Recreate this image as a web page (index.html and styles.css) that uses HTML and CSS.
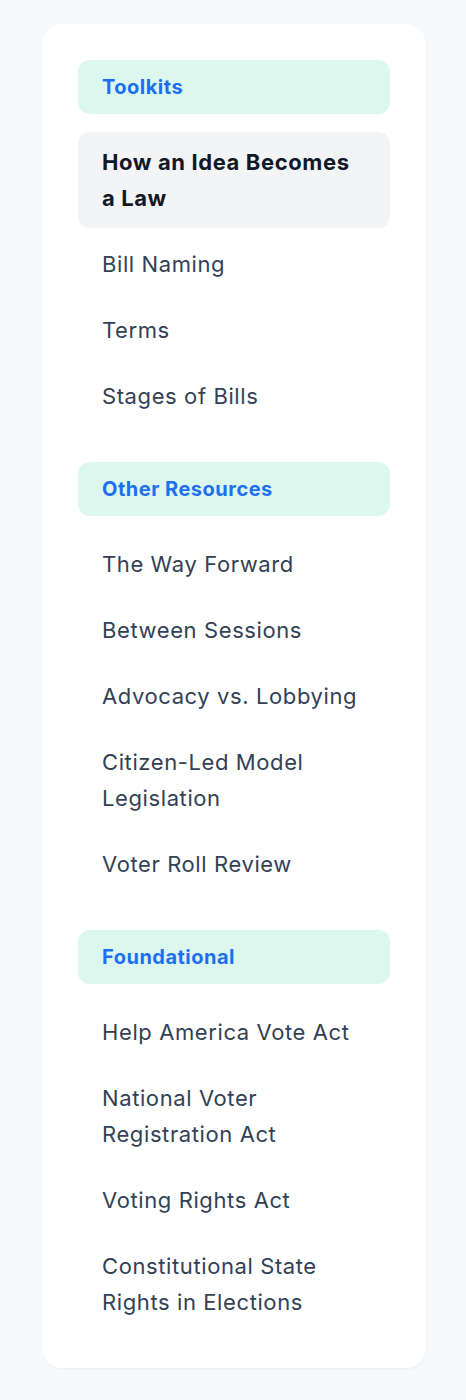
FILE: index.html
```html
<!DOCTYPE html>
<html lang="en">
<head>
<meta charset="utf-8">
<title>Toolkits</title>
<link rel="stylesheet" href="styles.css">
</head>
<body>
<nav class="card">
  <section class="group">
    <div class="group-title">Toolkits</div>
    <ul class="items">
      <li class="item active">How an Idea Becomes a Law</li>
      <li class="item">Bill Naming</li>
      <li class="item">Terms</li>
      <li class="item">Stages of Bills</li>
    </ul>
  </section>
  <section class="group">
    <div class="group-title">Other Resources</div>
    <ul class="items">
      <li class="item">The Way Forward</li>
      <li class="item">Between Sessions</li>
      <li class="item">Advocacy vs. Lobbying</li>
      <li class="item">Citizen-Led Model Legislation</li>
      <li class="item">Voter Roll Review</li>
    </ul>
  </section>
  <section class="group">
    <div class="group-title">Foundational</div>
    <ul class="items">
      <li class="item">Help America Vote Act</li>
      <li class="item">National Voter Registration Act</li>
      <li class="item">Voting Rights Act</li>
      <li class="item">Constitutional State Rights in Elections</li>
    </ul>
  </section>
</nav>
</body>
</html>
```

FILE: styles.css
```css
html, body {
  margin: 0;
  padding: 0;
  background: #f8f9fb;
}
body {
  font-family: Inter, "Noto Sans", sans-serif;
  padding: 24px 40px 32px 42px;
}
.card {
  width: 384px;
  box-sizing: border-box;
  background: #ffffff;
  border-radius: 20px;
  padding: 36px;
  display: flex;
  flex-direction: column;
  gap: 36px;
  box-shadow: 0 1px 3px rgba(15, 23, 42, 0.05);
}
.group {
  display: flex;
  flex-direction: column;
  gap: 18px;
}
.group-title {
  background: #dcf7ee;
  border-radius: 12px;
  height: 54px;
  box-sizing: border-box;
  padding: 0 24px;
  display: flex;
  align-items: center;
  color: #1d6ff2;
  font-weight: 700;
  font-size: 20px;
  letter-spacing: 0.5px;
}
.items {
  list-style: none;
  margin: 0;
  padding: 0;
  display: flex;
  flex-direction: column;
  gap: 6px;
}
.item {
  padding: 12px 24px;
  font-size: 22px;
  line-height: 36px;
  letter-spacing: 0.6px;
  color: #334155;
  border-radius: 12px;
}
.item.active {
  background: #f3f4f6;
  color: #111827;
  font-weight: 700;
}
```
